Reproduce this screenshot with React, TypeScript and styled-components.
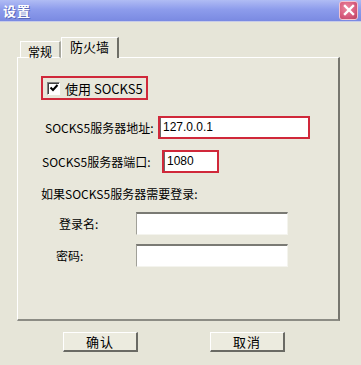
import React from "react";
import styled, { createGlobalStyle } from "styled-components";

const GlobalStyle = createGlobalStyle`
  html, body {
    margin: 0;
    padding: 0;
    background: #e6e5d8;
  }
  * {
    box-sizing: border-box;
  }
`;

export default function App() {
  return (
    <>
      <GlobalStyle />
      <Window>
        <TitleBar>
          <Title>设置</Title>
          <CloseButton>
            <svg width="12" height="12" viewBox="0 0 12 12">
              <path d="M2 2 L10 10 M10 2 L2 10" stroke="#fff" strokeWidth="2.4" strokeLinecap="square" />
            </svg>
          </CloseButton>
        </TitleBar>
        <Body>
          <Tabs>
            <Tab>常规</Tab>
            <Tab $active>防火墙</Tab>
          </Tabs>
          <Panel>
            <CheckBoxFrame>
              <CheckBox>
                <svg width="10" height="10" viewBox="0 0 10 10">
                  <path d="M1.5 4.5 L4 7 L8.5 2" stroke="#000" strokeWidth="2" fill="none" />
                </svg>
              </CheckBox>
              <CheckLabel>使用 SOCKS5</CheckLabel>
            </CheckBoxFrame>

            <FieldRow $indent={27} $top={16}>
              <Label $width={113}>SOCKS5服务器地址:</Label>
              <Input $width={152} $marked>127.0.0.1</Input>
            </FieldRow>

            <FieldRow $indent={24} $top={11}>
              <Label $width={120}>SOCKS5服务器端口:</Label>
              <Input $width={57} $marked>1080</Input>
            </FieldRow>

            <Note>如果SOCKS5服务器需要登录:</Note>

            <FieldRow $indent={41} $top={11}>
              <Label $width={77}>登录名:</Label>
              <Input $width={152} />
            </FieldRow>

            <FieldRow $indent={38} $top={9}>
              <Label $width={80}>密码:</Label>
              <Input $width={152} />
            </FieldRow>
          </Panel>
          <ButtonBar>
            <Button>确认</Button>
            <Button>取消</Button>
          </ButtonBar>
        </Body>
      </Window>
    </>
  );
}

const Window = styled.div`
  width: 361px;
  height: 365px;
  display: flex;
  flex-direction: column;
  background: #e6e5d8;
  font-family: "Noto Sans CJK SC", "Liberation Sans", sans-serif;
  font-size: 12px;
  color: #000;
  overflow: hidden;
`;

const TitleBar = styled.div`
  height: 22px;
  display: flex;
  align-items: center;
  justify-content: space-between;
  padding: 0 3px 0 3px;
  background: linear-gradient(180deg, #b0bcf4 0%, #8d9cec 45%, #7a8ae2 100%);
  border-bottom: 1px solid #c8cce8;
`;

const Title = styled.div`
  color: #fff;
  font-weight: 700;
  font-size: 13px;
  letter-spacing: 1px;
  text-shadow: 1px 1px 0 #5a66b8;
`;

const CloseButton = styled.div`
  width: 19px;
  height: 19px;
  margin-top: -1px;
  border-radius: 3px;
  display: flex;
  align-items: center;
  justify-content: center;
  background: radial-gradient(circle at 40% 35%, #ec8aa0 0%, #d65a7c 60%, #b8405e 100%);
  border: 1px solid #f2c4d0;
`;

const Body = styled.div`
  flex: 1;
  display: flex;
  flex-direction: column;
  padding: 15px 21px 0 17px;
`;

const Tabs = styled.div`
  display: flex;
  align-items: flex-end;
  padding-left: 3px;
  height: 21px;
  margin-bottom: -1px;
  position: relative;
  z-index: 1;
`;

const Tab = styled.div<{ $active?: boolean }>`
  height: ${(p) => (p.$active ? 21 : 17)}px;
  padding: ${(p) => (p.$active ? "1px 8px 0 8px" : "2px 7px 0 7px")};
  background: #e9e8dc;
  border-top: 1px solid #fff;
  border-left: 1px solid #fff;
  border-right: 2px solid ${(p) => (p.$active ? "#6e6e66" : "#a8a89e")};
  border-bottom: ${(p) => (p.$active ? "none" : "1px solid #fff")};
  line-height: 15px;
  ${(p) => (p.$active ? "font-size: 13px;" : "")}
`;

const Panel = styled.div`
  width: 323px;
  height: 264px;
  display: flex;
  flex-direction: column;
  padding-top: 18px;
  background: #e8e7db;
  border-top: 1px solid #fff;
  border-left: 1px solid #fff;
  border-right: 2px solid #76766e;
  border-bottom: 2px solid #8c8c84;
`;

const CheckBoxFrame = styled.div`
  margin-left: 23px;
  width: 107px;
  height: 24px;
  display: flex;
  align-items: center;
  gap: 5px;
  padding-left: 4px;
  border: 2px solid #d0283a;
`;

const CheckBox = styled.div`
  flex-shrink: 0;
  width: 13px;
  height: 13px;
  background: #fff;
  border-top: 1px solid #808080;
  border-left: 1px solid #808080;
  border-right: 1px solid #fff;
  border-bottom: 1px solid #fff;
  box-shadow: inset 1px 1px 0 #404040;
  display: flex;
  align-items: center;
  justify-content: center;
`;

const CheckLabel = styled.span`
  font-size: 13px;
  white-space: nowrap;
`;

const FieldRow = styled.div<{ $indent: number; $top: number }>`
  display: flex;
  align-items: center;
  height: 23px;
  margin-top: ${(p) => p.$top}px;
  padding-left: ${(p) => p.$indent}px;
`;

const Label = styled.span<{ $width: number }>`
  width: ${(p) => p.$width}px;
  flex-shrink: 0;
  white-space: nowrap;
  font-size: 12px;
`;

const Input = styled.div<{ $width: number; $marked?: boolean }>`
  width: ${(p) => p.$width}px;
  height: 23px;
  background: #fff;
  font-family: "Liberation Sans", Arial, sans-serif;
  font-size: 12px;
  line-height: 19px;
  padding-left: 3px;
  ${(p) =>
    p.$marked
      ? `
    border: 2px solid #d0283a;
    box-shadow: inset 1px 0 0 #6a6a6a;
  `
      : `
    border-top: 2px solid #7a7a74;
    border-left: 1px solid #a0a098;
    border-right: 1px solid #f4f4ee;
    border-bottom: 1px solid #f4f4ee;
  `}
`;

const Note = styled.div`
  margin-top: 14px;
  margin-left: 23px;
  height: 14px;
  line-height: 14px;
  white-space: nowrap;
`;

const ButtonBar = styled.div`
  display: flex;
  gap: 72px;
  padding-left: 46px;
  margin-top: 11px;
`;

const Button = styled.div`
  width: 75px;
  height: 20px;
  display: flex;
  align-items: center;
  justify-content: center;
  background: #ecebdf;
  border-top: 1px solid #fff;
  border-left: 1px solid #fff;
  border-right: 2px solid #6a6a64;
  border-bottom: 2px solid #6a6a64;
  font-size: 13px;
  letter-spacing: 1px;
`;
